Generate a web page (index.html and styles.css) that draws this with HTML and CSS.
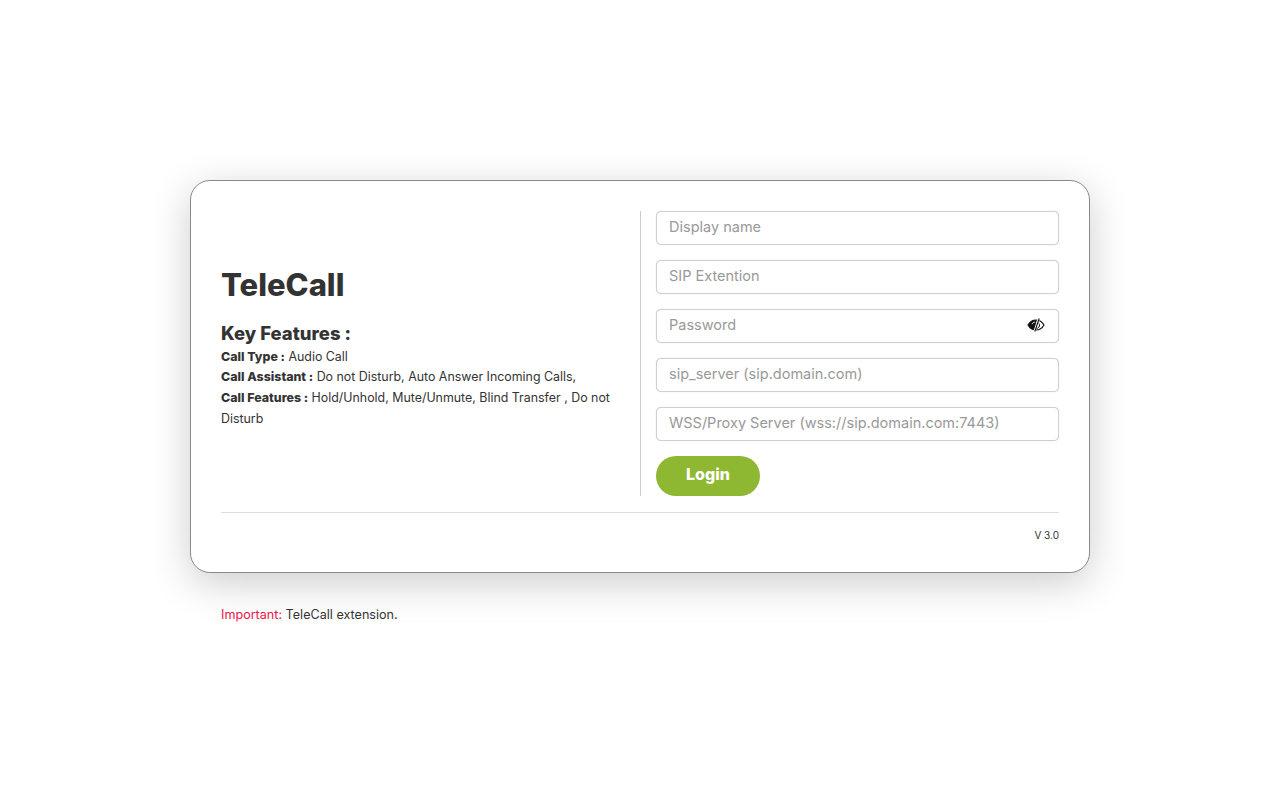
FILE: index.html
```html
<!DOCTYPE html>
<html lang="en">
<head>
  <meta charset="utf-8">
  <title>TeleCall</title>
  <link rel="stylesheet" href="styles.css">
</head>
<body>
  <div class="pagina">
    <div class="tarjeta">
      <div class="columnas">
        <div class="info">
          <h1 class="titulo">TeleCall</h1>
          <h2 class="subtitulo">Key Features :</h2>
          <p class="linea"><b>Call Type :</b> Audio Call</p>
          <p class="linea"><b>Call Assistant :</b> Do not Disturb, Auto Answer Incoming Calls,</p>
          <p class="linea"><b>Call Features :</b> Hold/Unhold, Mute/Unmute, Blind Transfer , Do not Disturb</p>
        </div>
        <form class="formulario">
          <input class="campo" type="text" placeholder="Display name">
          <input class="campo" type="text" placeholder="SIP Extention">
          <div class="campo-clave">
            <input class="campo" type="password" placeholder="Password">
            <svg class="ojo" viewBox="0 0 18 14" width="18" height="14" aria-hidden="true">
              <path d="M1 7C3 3.500 5.500 2 9 2s6 1.500 8 5c-2 3.500-4.500 5-8 5S3 10.500 1 7Z" fill="none" stroke="#111" stroke-width="1.200"/>
              <path d="M1 7C3 3.500 5.500 2 9.800 2L7.600 12C4.500 11.700 2.800 10 1 7Z" fill="#111"/>
              <path d="M5 6.200C5.500 5 6.500 4.300 7.800 4.200" fill="none" stroke="#fff" stroke-width="1"/>
              <path d="M11 4.500C12.600 5.500 13.200 7.600 11.800 9.300 11 10.200 10 10.500 9 10.500" fill="none" stroke="#111" stroke-width="1"/>
              <path d="M12 .5 7.400 13.500" stroke="#fff" stroke-width="2.200"/>
              <path d="M12.200 .5 7.800 13.500" stroke="#111" stroke-width="1.100"/>
            </svg>
          </div>
          <input class="campo" type="text" placeholder="sip_server (sip.domain.com)">
          <input class="campo" type="text" placeholder="WSS/Proxy Server (wss://sip.domain.com:7443)">
          <button class="boton" type="button">Login</button>
        </form>
      </div>
      <div class="pie">V 3.0</div>
    </div>
    <p class="aviso"><span class="rojo">Important:</span> TeleCall extension.</p>
  </div>
</body>
</html>
```

FILE: styles.css
```css
body {
  margin: 0;
  background: #fff;
  font-family: "Inter", "Liberation Sans", sans-serif;
  color: #333;
}

.pagina {
  width: 900px;
  margin: 0 auto;
  padding-top: 180px;
}

.tarjeta {
  height: 393px;
  box-sizing: border-box;
  padding: 30px 30px 0;
  background: #fff;
  border: 1px solid #8a8a8a;
  border-radius: 20px;
  box-shadow: 0 10px 40px rgba(0, 0, 0, 0.2);
}

.columnas {
  display: flex;
  height: 285px;
  padding-bottom: 16px;
  border-bottom: 1px solid #ddd;
}

.info {
  width: 420px;
  box-sizing: border-box;
  padding: 0 20px 12px 0;
  border-right: 1px solid #ccc;
  display: flex;
  flex-direction: column;
  justify-content: center;
}

.titulo {
  margin: 0 0 17px;
  font-size: 31px;
  line-height: 38px;
  font-weight: 800;
}

.subtitulo {
  margin: 0 0 2px;
  font-size: 18.500px;
  line-height: 24px;
  font-weight: 800;
}

.linea {
  margin: 0;
  font-size: 12.400px;
  line-height: 20.600px;
}

.linea b {
  font-weight: 800;
}

.formulario {
  flex: 1;
  padding-left: 15px;
  display: flex;
  flex-direction: column;
  gap: 15px;
}

.campo {
  display: block;
  width: 100%;
  height: 34px;
  box-sizing: border-box;
  padding: 0 12px 4px;
  border: 1px solid #d0d0d0;
  border-radius: 5px;
  box-shadow: 0 0 1px #ccc;
  font-family: inherit;
  font-size: 14.500px;
  color: #333;
  outline: none;
}

.campo::placeholder {
  color: #999;
}

.campo-clave {
  position: relative;
}

.ojo {
  position: absolute;
  top: 9px;
  right: 14px;
}

.boton {
  width: 104px;
  height: 40px;
  padding: 0 0 4px;
  border: 0;
  border-radius: 20px;
  background: #8fb832;
  color: #fff;
  font-family: inherit;
  font-size: 16px;
  font-weight: 800;
}

.pie {
  padding-top: 16px;
  text-align: right;
  font-size: 10px;
  line-height: 13px;
}

.aviso {
  margin: 32px 0 0;
  padding-left: 31px;
  font-size: 12.600px;
  line-height: 20px;
}

.rojo {
  color: #f0124a;
}
```
